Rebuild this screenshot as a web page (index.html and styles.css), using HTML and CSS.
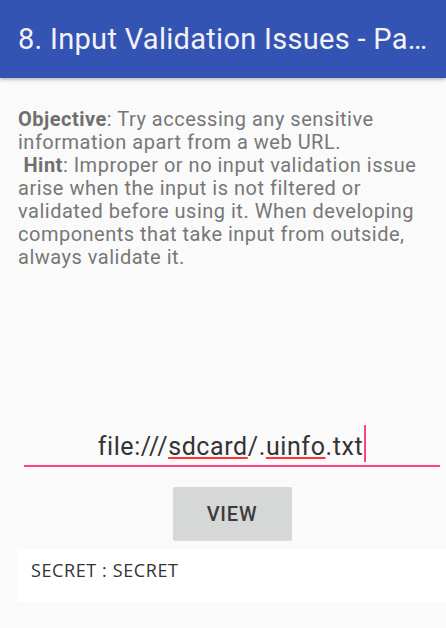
FILE: index.html
```html
<!DOCTYPE html>
<html>
<head>
<meta charset="utf-8">
<link rel="stylesheet" href="styles.css">
</head>
<body>
<header class="appbar">
  <h1 class="title">8. Input Validation Issues - Pa…</h1>
</header>
<main class="content">
  <p class="desc"><b>Objective</b>: Try accessing any sensitive<br>information apart from a web URL.<br>&nbsp;<b>Hint</b>: Improper or no input validation issue<br>arise when the input is not filtered or<br>validated before using it. When developing<br>components that take input from outside,<br>always validate it.</p>
  <div class="field">file:///<span class="spell">sdcard</span>/.<span class="spell">uinfo</span>.txt<span class="cursor"></span></div>
  <div class="actions"><button class="btn">VIEW</button></div>
  <div class="result">SECRET : SECRET</div>
</main>
</body>
</html>
```
FILE: styles.css
```css
html, body {
  margin: 0;
  padding: 0;
}
body {
  width: 446px;
  height: 628px;
  overflow: hidden;
  background: #fafafa;
  font-family: Roboto, "Liberation Sans", sans-serif;
}
.appbar {
  height: 78px;
  background: #3454b4;
  box-shadow: 0 1px 4px rgba(0, 0, 0, 0.35);
  position: relative;
  z-index: 1;
}
.title {
  margin: 0;
  padding: 0 0 0 18px;
  font-size: 29px;
  letter-spacing: 0.3px;
  font-weight: 400;
  line-height: 78px;
  color: #f2f2f6;
  white-space: nowrap;
}
.content {
  padding: 30px 0 0 18px;
}
.desc {
  margin: 0;
  width: 420px;
  white-space: nowrap;
  font-size: 20px;
  letter-spacing: 0.5px;
  line-height: 23px;
  color: #777;
}
.desc b {
  font-weight: 700;
  color: #6f6f6f;
}
.field {
  margin: 160px 6px 0 6px;
  font-size: 25px;
  letter-spacing: 0.6px;
  line-height: 36px;
  color: #333;
  text-align: center;
  border-bottom: 2px solid #ff4081;
}
.spell {
  text-decoration: underline;
  text-decoration-color: #f33;
  text-decoration-thickness: 2px;
  text-underline-offset: 2px;
}
.cursor {
  display: inline-block;
  width: 2px;
  height: 37px;
  margin-top: -5px;
  vertical-align: -7px;
  background: #ff4081;
  margin-left: 1px;
}
.actions {
  display: flex;
  justify-content: center;
  margin-top: 20px;
}
.btn {
  width: 119px;
  height: 53px;
  border: none;
  border-radius: 2px;
  background: #d6d7d7;
  box-shadow: 0 1px 1px rgba(0, 0, 0, 0.12);
  font-family: Roboto, "Liberation Sans", sans-serif;
  font-size: 20px;
  letter-spacing: 0.8px;
  font-weight: 500;
  color: #3c3c3c;
  padding: 0;
}
.result {
  margin-top: 9px;
  height: 53px;
  box-sizing: border-box;
  padding: 10px 0 0 13px;
  background: #fff;
  font-family: "Open Sans", sans-serif;
  font-size: 18px;
  letter-spacing: 0.6px;
  line-height: 23px;
  color: #333;
}
```
